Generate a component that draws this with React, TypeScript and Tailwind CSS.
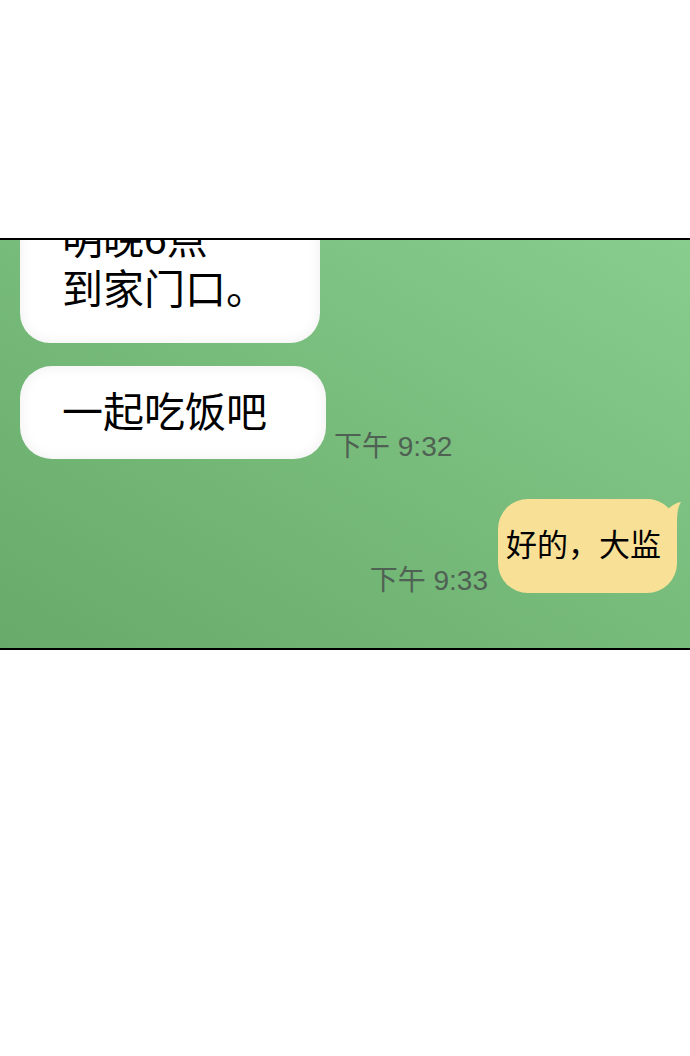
import React from "react";

const cjk = "font-['Liberation_Sans','Noto_Sans_CJK_SC',sans-serif]";

function Tail() {
  return (
    <svg
      className="absolute -right-[4px] top-[0px]"
      width="44"
      height="34"
      viewBox="0 0 44 34"
    >
      <path d="M4 0 C16 0 26 2 30 11 C34 7 38 4 44 3 C40 10 40 16 40 34 L4 34 Z" fill="#f8e196" />
    </svg>
  );
}

export default function App() {
  return (
    <div className={`w-[690px] h-[1056px] bg-white ${cjk}`}>
      <div className="h-[238px]" />
      <div className="h-[412px] border-y-2 border-black overflow-hidden bg-linear-to-bl from-[#88cd8e] to-[#67aa69]">
        <div className="flex flex-col pl-[20px] pr-[10px]">
          {/* clipped bubble */}
          <div className="-mt-[53px] w-[300px] rounded-[30px] bg-white shadow-[inset_0_0_14px_rgba(0,0,0,0.07)] pl-[42px] pt-[28px] pb-[28px] text-[41px] leading-[50px] text-black">
            <div>明晚6点</div>
            <div>到家门口。</div>
          </div>

          <div className="mt-[23px] flex items-end gap-[8px]">
            <div className="w-[306px] h-[93px] flex items-center rounded-[32px] bg-white shadow-[inset_0_0_14px_rgba(0,0,0,0.07)] pl-[42px] text-[41px] leading-[50px] text-black">
              一起吃饭吧
            </div>
            <div className="text-[28px] leading-[32px] mb-[-4px] text-[#4f6153]">
              下午 9:32
            </div>
          </div>

          <div className="mt-[40px] flex items-end justify-end gap-[10px] pr-[3px]">
            <div className="text-[28px] leading-[32px] mb-[-4px] text-[#4f6153]">
              下午 9:33
            </div>
            <div className="relative w-[179px] h-[94px] flex items-center rounded-[30px] bg-[#f8e196] pl-[8px] text-[31px] leading-[40px] text-black">
              <Tail />
              <span className="relative">好的，大监</span>
            </div>
          </div>
        </div>
      </div>
    </div>
  );
}
